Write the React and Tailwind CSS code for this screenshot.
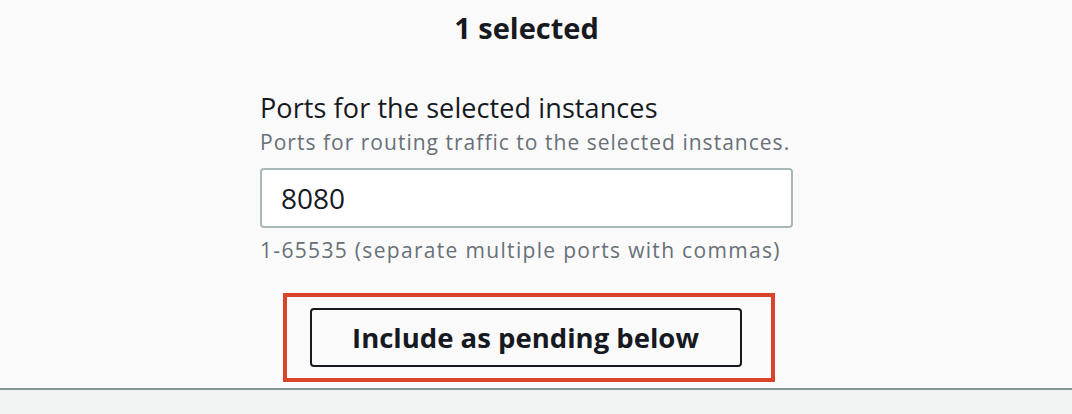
export default function App() {
  return (
    <div className="w-[1072px] h-[414px] flex flex-col bg-[#fafafa] text-[#16191f] font-['Open_Sans',sans-serif] overflow-hidden">
      <div className="h-[388px] flex flex-col items-center pr-[19px]">
        {/* En-tête */}
        <h1 className="pt-[8px] text-[29px] leading-[40px] font-bold">1 selected</h1>

        <div className="w-[533px] mt-[44px] flex flex-col">
          <label className="text-[27px] leading-[32px] tracking-[0.1px] whitespace-nowrap">Ports for the selected instances</label>
          <p className="mt-[4px] text-[21px] leading-[28px] tracking-[1.02px] whitespace-nowrap text-[#687078]">
            Ports for routing traffic to the selected instances.
          </p>
          <div className="mt-[12px] h-[60px] border-2 border-[#aab7b8] rounded-[4px] bg-white flex items-center px-[19px]">
            <span className="text-[28px]">8080</span>
          </div>
          <p className="mt-[8px] text-[21px] leading-[28px] tracking-[1.32px] whitespace-nowrap text-[#687078]">
            1-65535 (separate multiple ports with commas)
          </p>
        </div>

        {/* Bouton encadré */}
        <div className="mt-[29px] ml-[4px] w-[492px] h-[89px] border-4 border-[#d9432a] flex items-center pl-[23px]">
          <button className="w-[432px] h-[59px] border-2 border-[#16191f] rounded-[4px] text-[27.5px] font-bold">
            Include as pending below
          </button>
        </div>
      </div>
      <div className="h-[2px] bg-[#879596]" />
      <div className="flex-1 bg-[#f2f3f3]" />
    </div>
  );
}
